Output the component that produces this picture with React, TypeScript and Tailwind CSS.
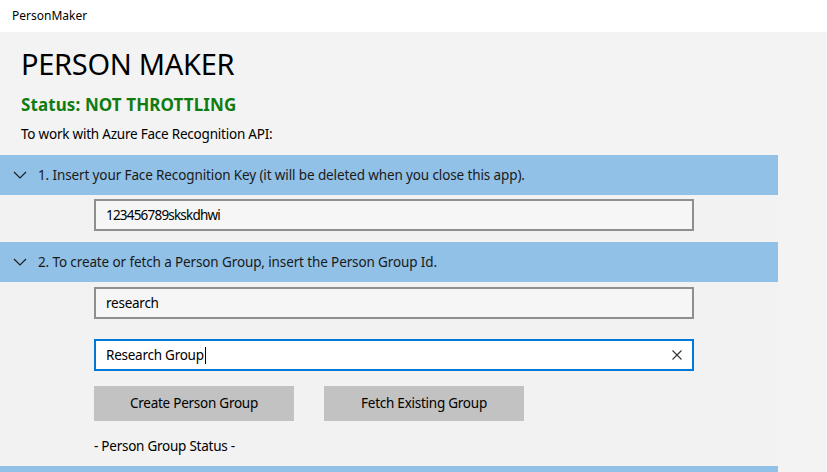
import React from "react";

function Chevron() {
  return (
    <svg width="14" height="8" viewBox="0 0 14 8" fill="none" stroke="#1a1a1a" strokeWidth="1.1">
      <path d="M1 1 L7 7 L13 1" />
    </svg>
  );
}

function SectionHeader({ text }: { text: string }) {
  return (
    <div className="flex h-10 w-[778px] items-center bg-[#91c1e7]">
      <div className="flex w-[38px] justify-center pl-[1px]">
        <Chevron />
      </div>
      <span className="text-[13.5px] tracking-[-0.12px] text-[#1a1a1a]">{text}</span>
    </div>
  );
}

export default function App() {
  return (
    <div className="h-[472px] w-[827px] overflow-hidden bg-[#f3f3f3] font-['Noto_Sans',sans-serif] text-black">
      {/* title bar */}
      <div className="flex h-8 items-center bg-white pl-3 text-[12px]">PersonMaker</div>

      <div className="px-[21px] pt-[12px]">
        <h1 className="text-[29px] leading-[40px] tracking-[-0.3px]">PERSON MAKER</h1>
        <div className="mt-[10px] text-[17px] font-bold leading-[22px] tracking-[0.1px] text-[#107c10]">Status: NOT THROTTLING</div>
        <div className="mt-[8px] text-[13.5px] leading-[20px] tracking-[-0.22px]">To work with Azure Face Recognition API:</div>
      </div>

      <div className="mt-[11px] text-[13.5px] tracking-[-0.25px]">
        <SectionHeader text="1. Insert your Face Recognition Key (it will be deleted when you close this app)." />
        <div className="w-[778px] bg-[#f2f2f2] pb-[11px] pl-[94px] pt-[4px]">
          <div className="flex h-8 w-[600px] items-center border-2 border-[#8f8f8f] bg-[#f6f6f6] px-[10px] tracking-[-0.8px]">
            123456789skskdhwi
          </div>
        </div>

        <SectionHeader text="2. To create or fetch a Person Group, insert the Person Group Id." />
        <div className="flex w-[778px] flex-col bg-[#f2f2f2] pl-[94px] pt-[5px]">
          <div className="flex h-8 w-[600px] items-center border-2 border-[#8f8f8f] bg-[#f6f6f6] px-[10px]">
            research
          </div>
          <div className="mt-[20px] flex h-8 w-[600px] items-center border-2 border-[#0078d7] bg-white pl-[10px] pr-[9px]">
            <span>Research Group</span>
            <span className="ml-[1px] h-[17px] w-px bg-black" />
            <svg className="ml-auto" width="12" height="12" viewBox="0 0 12 12" stroke="#333" strokeWidth="1.1">
              <path d="M1.5 1.5 L10.5 10.5 M10.5 1.5 L1.5 10.5" />
            </svg>
          </div>
          <div className="mt-[15px] flex gap-[30px]">
            <button className="h-[35px] w-[200px] bg-[#c2c2c2]">Create Person Group</button>
            <button className="h-[35px] w-[200px] bg-[#c2c2c2]">Fetch Existing Group</button>
          </div>
          <div className="mt-[15px] h-[30px] leading-[20px]">- Person Group Status -</div>
        </div>
        <div className="h-10 w-[778px] bg-[#91c1e7]" />
      </div>
    </div>
  );
}
